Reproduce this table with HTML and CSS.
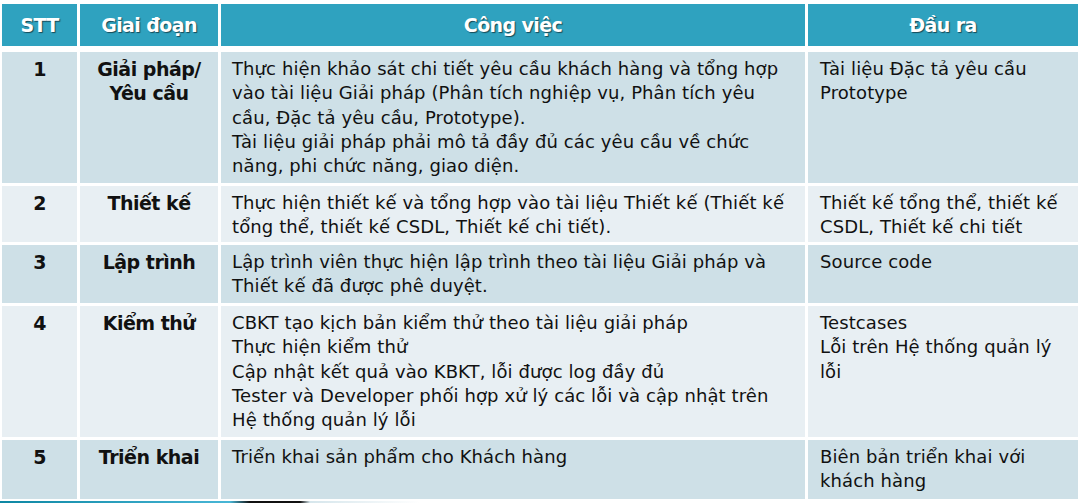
FILE: index.html
```html
<!DOCTYPE html>
<html lang="vi">
<head>
<meta charset="utf-8">
<title>Quy trình</title>
<link rel="stylesheet" href="styles.css">
</head>
<body>
<div class="page">
  <div class="grid">
    <div class="cell head">STT</div>
    <div class="cell head">Giai đoạn</div>
    <div class="cell head">Công việc</div>
    <div class="cell head">Đầu ra</div>

    <div class="cell odd num">1</div>
    <div class="cell odd phase">Giải pháp/<br>Yêu cầu</div>
    <div class="cell odd text">Thực hiện khảo sát chi tiết yêu cầu khách hàng và tổng hợp<br>vào tài liệu Giải pháp (Phân tích nghiệp vụ, Phân tích yêu<br>cầu, Đặc tả yêu cầu, Prototype).<br>Tài liệu giải pháp phải mô tả đầy đủ các yêu cầu về chức<br>năng, phi chức năng, giao diện.</div>
    <div class="cell odd text out">Tài liệu Đặc tả yêu cầu<br>Prototype</div>

    <div class="cell even num">2</div>
    <div class="cell even phase">Thiết kế</div>
    <div class="cell even text">Thực hiện thiết kế và tổng hợp vào tài liệu Thiết kế (Thiết kế<br>tổng thể, thiết kế CSDL, Thiết kế chi tiết).</div>
    <div class="cell even text out">Thiết kế tổng thể, thiết kế<br>CSDL, Thiết kế chi tiết</div>

    <div class="cell odd num">3</div>
    <div class="cell odd phase">Lập trình</div>
    <div class="cell odd text">Lập trình viên thực hiện lập trình theo tài liệu Giải pháp và<br>Thiết kế đã được phê duyệt.</div>
    <div class="cell odd text out">Source code</div>

    <div class="cell even num">4</div>
    <div class="cell even phase">Kiểm thử</div>
    <div class="cell even text">CBKT tạo kịch bản kiểm thử theo tài liệu giải pháp<br>Thực hiện kiểm thử<br>Cập nhật kết quả vào KBKT, lỗi được log đầy đủ<br>Tester và Developer phối hợp xử lý các lỗi và cập nhật trên<br>Hệ thống quản lý lỗi</div>
    <div class="cell even text out">Testcases<br>Lỗi trên Hệ thống quản lý<br>lỗi</div>

    <div class="cell odd num">5</div>
    <div class="cell odd phase">Triển khai</div>
    <div class="cell odd text">Triển khai sản phẩm cho Khách hàng</div>
    <div class="cell odd text out">Biên bản triển khai với<br>khách hàng</div>
  </div>
  <div class="strip"></div>
</div>
</body>
</html>
```

FILE: styles.css
```css
html, body {
  margin: 0;
  padding: 0;
  background: #ffffff;
}

body {
  font-family: "DejaVu Sans", Verdana, sans-serif;
  color: #111111;
  overflow: hidden;
}

.page {
  padding: 4px 0 0 2px;
}

.grid {
  display: grid;
  width: 1076px;
  grid-template-columns: 75px 138px 584px 270px;
  grid-template-rows: 45px 131px 56px 58px 131px 59px;
  column-gap: 3px;
  row-gap: 3px;
}

.cell {
  box-sizing: border-box;
  white-space: nowrap;
}

.head {
  background: #2fa2bf;
  color: #ffffff;
  font-weight: bold;
  font-size: 19px;
  letter-spacing: -0.6px;
  display: flex;
  align-items: center;
  justify-content: center;
  text-shadow: 1px 1px 1px rgba(0, 0, 0, 0.55);
  margin-bottom: 3px;
}

.odd {
  background: #cee0e7;
}

.even {
  background: #e8eff3;
}

.num,
.phase {
  font-weight: bold;
  font-size: 19px;
  letter-spacing: -0.5px;
  line-height: 24px;
  text-align: center;
  padding-top: 5px;
}

.phase {
  padding-left: 0;
}

.text {
  font-size: 18px;
  line-height: 24.3px;
  letter-spacing: 0.1px;
  padding: 5px 0 0 11px;
}

.out {
  padding-left: 12px;
}

.strip {
  margin-top: 2px;
  width: 420px;
  height: 2px;
  margin-left: -2px;
  background: linear-gradient(to right, #0d87a3 0, #48b6d6 230px, #111111 250px, #111111 300px, #d6e6ec 310px, rgba(255, 255, 255, 0) 420px);
}
```
